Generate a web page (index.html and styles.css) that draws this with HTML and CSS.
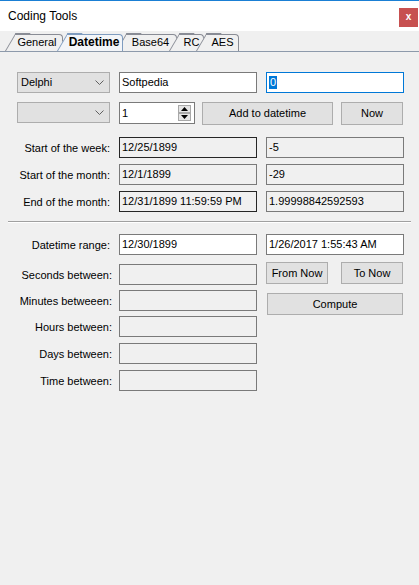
FILE: index.html
```html
<!DOCTYPE html>
<html>
<head>
<meta charset="utf-8">
<link rel="stylesheet" href="styles.css">
</head>
<body>
<div class="window">
  <div class="titlebar">
    <span class="title">Coding Tools</span>
    <span class="close">x</span>
  </div>
  <div class="tabstrip">
    <div class="tab t-general">General</div>
    <div class="tab t-datetime active">Datetime</div>
    <div class="tab t-base64">Base64</div>
    <div class="tab t-rc">RC</div>
    <div class="tab t-aes">AES</div>
  </div>
  <div class="panel">
    <div class="row r1">
      <div class="combo"><span>Delphi</span><svg class="chev" width="9" height="5" viewBox="0 0 9 5"><polyline points="0.5,0.5 4.5,4.5 8.5,0.5" fill="none" stroke="#606060" stroke-width="1"/></svg></div>
      <div class="field w138">Softpedia</div>
      <div class="field w138 focus"><span class="sel">0</span></div>
    </div>
    <div class="row r2">
      <div class="combo"><span></span><svg class="chev" width="9" height="5" viewBox="0 0 9 5"><polyline points="0.5,0.5 4.5,4.5 8.5,0.5" fill="none" stroke="#606060" stroke-width="1"/></svg></div>
      <div class="spin">
        <span>1</span>
        <div class="spinbtns">
          <div class="sb"><svg width="7" height="4" viewBox="0 0 7 4"><polygon points="3.5,0 7,4 0,4" fill="#000"/></svg></div>
          <div class="sb"><svg width="7" height="4" viewBox="0 0 7 4"><polygon points="0,0 7,0 3.5,4" fill="#000"/></svg></div>
        </div>
      </div>
      <div class="btn btn-add">Add to datetime</div>
      <div class="btn btn-now">Now</div>
    </div>
    <div class="lrow r3">
      <div class="label">Start of the week:</div>
      <div class="field w138 ro dark">12/25/1899</div>
      <div class="field w138 ro right">-5</div>
    </div>
    <div class="lrow r4">
      <div class="label">Start of the month:</div>
      <div class="field w138 ro">12/1/1899</div>
      <div class="field w138 ro right">-29</div>
    </div>
    <div class="lrow r5">
      <div class="label">End of the month:</div>
      <div class="field w138 ro dark">12/31/1899 11:59:59 PM</div>
      <div class="field w138 ro right">1.99998842592593</div>
    </div>
    <div class="sep"></div>
    <div class="lower">
      <div class="lcol">
        <div class="lrow r6">
          <div class="label">Datetime range:</div>
          <div class="field w138">12/30/1899</div>
        </div>
        <div class="lrow r7">
          <div class="label wide">Seconds between:</div>
          <div class="field w138 ro"></div>
        </div>
        <div class="lrow r8">
          <div class="label wide">Minutes betweeen:</div>
          <div class="field w138 ro"></div>
        </div>
        <div class="lrow r9">
          <div class="label wide">Hours between:</div>
          <div class="field w138 ro"></div>
        </div>
        <div class="lrow r10">
          <div class="label wide">Days between:</div>
          <div class="field w138 ro"></div>
        </div>
        <div class="lrow r11">
          <div class="label wide">Time between:</div>
          <div class="field w138 ro"></div>
        </div>
      </div>
      <div class="rcol">
        <div class="field w138">1/26/2017 1:55:43 AM</div>
        <div class="btnrow">
          <div class="btn btn-small">From Now</div>
          <div class="btn btn-small">To Now</div>
        </div>
        <div class="btn btn-compute">Compute</div>
      </div>
    </div>
  </div>
</div>
</body>
</html>
```

FILE: styles.css
```css
* { box-sizing: border-box; }
body {
  margin: 0;
  background: #f0f0f0;
  font-family: "Liberation Sans", Arial, sans-serif;
  font-size: 11px;
  color: #000;
}
.window {
  width: 419px;
  height: 585px;
  background: #f0f0f0;
  overflow: hidden;
}
.titlebar {
  height: 31px;
  border-top: 1px solid #1a7fd4;
  background: #fff;
  display: flex;
  justify-content: space-between;
  align-items: flex-start;
  padding-left: 8px;
  padding-right: 1px;
}
.title {
  font-size: 12px;
  line-height: 14px;
  margin-top: 8px;
}
.close {
  width: 19px;
  height: 19px;
  margin-top: 7px;
  background: #c75050;
  color: #fff;
  font-weight: bold;
  font-size: 10px;
  line-height: 18px;
  text-align: center;
}

/* tabs */
.tabstrip {
  display: flex;
  height: 18px;
  margin-top: 3px;
  border-bottom: 1px solid #8d9aab;
  padding-left: 5px;
}
.tab {
  position: relative;
  height: 17px;
  line-height: 17px;
  padding-left: 10px;
  text-align: center;
  font-size: 11px;
  z-index: 1;
}
.tab::before {
  content: "";
  position: absolute;
  left: 0;
  bottom: 0;
  width: 14px;
  height: 17px;
  border-left: 1px solid #898c95;
  border-top: 1px solid #898c95;
  background: #f0f0f0;
  transform-origin: 0 100%;
  transform: skewX(-30.5deg);
  z-index: -1;
}
.tab::after {
  content: "";
  position: absolute;
  left: 10px;
  right: 0;
  top: 0;
  bottom: 0;
  border-top: 1px solid #898c95;
  border-right: 1px solid #898c95;
  border-top-right-radius: 4px;
  background: #f0f0f0;
  z-index: -1;
}
.tab.active::before,
.tab.active::after {
  border-color: #7f9cbf;
  background: #f3f5f8;
}
.t-general { width: 58px; z-index: 1; padding-right: 4px; }
.t-datetime { width: 66px; margin-left: -6px; z-index: 5; font-weight: bold; font-size: 12px; padding-right: 2px; }
.t-base64 { width: 61px; margin-left: -7px; z-index: 2; padding-right: 2px; }
.t-rc { width: 35px; margin-left: -8px; z-index: 3; }
.t-aes { width: 43px; margin-left: -8px; z-index: 4; }

/* panel */
.panel {
  padding-top: 20px;
}
.row {
  display: flex;
  align-items: flex-start;
  padding-left: 17px;
}
.r2 { margin-top: 9px; }
.r1 .combo { margin-right: 9px; }
.r1 .field + .field { margin-left: 9px; }

.combo {
  width: 93px;
  height: 21px;
  background: #e1e1e1;
  border: 1px solid #adadad;
  display: flex;
  align-items: center;
  justify-content: space-between;
  padding-left: 3px;
  padding-right: 5px;
  line-height: 19px;
}
.r2 .combo { margin-right: 9px; }

.field {
  height: 21px;
  border: 1px solid #7a7a7a;
  background: #fff;
  padding-left: 2px;
  line-height: 19px;
  white-space: nowrap;
  overflow: hidden;
}
.w138 { width: 138px; }
.field.ro { background: #f0f0f0; }
.field.dark { border-color: #262626; }
.field.focus { border-color: #0078d7; }
.sel {
  display: inline-block;
  background: #0078d7;
  color: #fff;
  line-height: 13px;
  padding: 0 1px;
  vertical-align: middle;
  margin-top: -2px;
}

.spin {
  width: 76px;
  height: 22px;
  border: 1px solid #7a7a7a;
  background: #fff;
  display: flex;
  justify-content: space-between;
  align-items: flex-start;
  padding-left: 2px;
  padding-right: 3px;
  line-height: 20px;
  margin-right: 7px;
}
.spinbtns {
  display: flex;
  flex-direction: column;
  margin-top: 2px;
  gap: 0;
}
.sb {
  width: 13px;
  height: 8px;
  background: #e5e5e5;
  border: 1px solid #a8a8a8;
  display: flex;
  align-items: center;
  justify-content: center;
}
.sb + .sb { margin-top: 0; }

.btn {
  height: 23px;
  background: #e1e1e1;
  border: 1px solid #adadad;
  text-align: center;
  line-height: 21px;
  white-space: nowrap;
}
.btn-add { width: 131px; margin-right: 8px; }
.btn-now { width: 62px; }

.lrow {
  display: flex;
  align-items: center;
}
.label {
  width: 110px;
  margin-right: 9px;
  text-align: right;
  white-space: nowrap;
}
.label.wide {
  width: 112px;
  margin-right: 7px;
}
.field.right { margin-left: 9px; }
.r3 { margin-top: 12px; }
.r4 { margin-top: 6px; }
.r5 { margin-top: 6px; }

.sep {
  margin: 9px 8px 0 8px;
  height: 2px;
  border-top: 1px solid #a0a0a0;
  border-bottom: 1px solid #fff;
}

.lower {
  display: flex;
  align-items: flex-start;
  margin-top: 11px;
}
.lcol {
  display: flex;
  flex-direction: column;
}
.r7 { margin-top: 9px; }
.r8 { margin-top: 5px; }
.r9 { margin-top: 5px; }
.r10 { margin-top: 6px; }
.r11 { margin-top: 6px; }

.rcol {
  margin-left: 9px;
  display: flex;
  flex-direction: column;
}
.btnrow {
  display: flex;
  gap: 13px;
  margin-top: 7px;
}
.btn-small { width: 62px; height: 22px; line-height: 20px; }
.btn-compute {
  width: 136px;
  height: 22px;
  line-height: 20px;
  margin-top: 9px;
  margin-left: 1px;
}
```
